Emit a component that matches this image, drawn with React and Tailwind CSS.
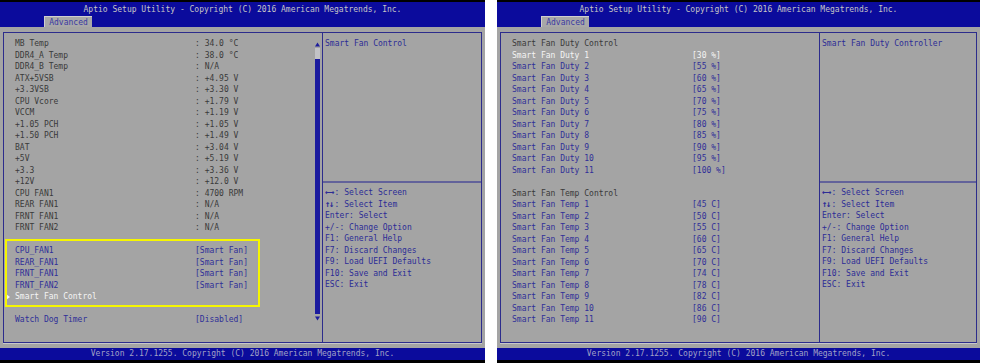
import React from 'react';

const ROW = 'h-[11.5px] leading-[11.5px] whitespace-pre';

const TONES = {
  info: 'text-[#3a3a3a]',
  item: 'text-[#2f2f98]',
  sel: 'text-[#f4f4f4]',
};

// first two help lines start with arrow pairs, drawn a touch larger
const keys = [
  ['←→', ': Select Screen'],
  ['↑↓', ': Select Item'],
  ['', 'Enter: Select'],
  ['', '+/-: Change Option'],
  ['', 'F1: General Help'],
  ['', 'F7: Discard Changes'],
  ['', 'F9: Load UEFI Defaults'],
  ['', 'F10: Save and Exit'],
  ['', 'ESC: Exit'],
];

const sensors = [
  ['MB Temp', ': 34.0 °C'],
  ['DDR4_A Temp', ': 38.0 °C'],
  ['DDR4_B Temp', ': N/A'],
  ['ATX+5VSB', ': +4.95 V'],
  ['+3.3VSB', ': +3.30 V'],
  ['CPU Vcore', ': +1.79 V'],
  ['VCCM', ': +1.19 V'],
  ['+1.05 PCH', ': +1.05 V'],
  ['+1.50 PCH', ': +1.49 V'],
  ['BAT', ': +3.04 V'],
  ['+5V', ': +5.19 V'],
  ['+3.3', ': +3.36 V'],
  ['+12V', ': +12.0 V'],
  ['CPU FAN1', ': 4700 RPM'],
  ['REAR FAN1', ': N/A'],
  ['FRNT FAN1', ': N/A'],
  ['FRNT FAN2', ': N/A'],
];

const fans = ['CPU_FAN1', 'REAR_FAN1', 'FRNT_FAN1', 'FRNT_FAN2'];
const duties = ['30', '55', '60', '65', '70', '75', '80', '85', '90', '95', '100'];
const temps = ['45', '50', '55', '60', '65', '70', '74', '78', '82', '86', '90'];

function Row({ label, value, tone = 'item' }) {
  return (
    <div className={`flex ${ROW} ${TONES[tone]}`}>
      <span className="w-[180px] shrink-0">{label}</span>
      <span>{value}</span>
    </div>
  );
}

function Blank() {
  return <div className="h-[11.5px]" />;
}

function ScrollBar() {
  return (
    <div className="w-[5px] mr-[2px] pt-[9px] pb-[21px] flex flex-col shrink-0">
      <svg width="5" height="5" viewBox="0 0 5 5" className="block">
        <path d="M2.5 0.5 L5 4.5 L0 4.5 Z" fill="#1c1c9c" />
      </svg>
      <div className="mt-px h-[11px] bg-[#c2c2c6]" />
      <div className="flex-1 bg-[#1a1a9e]" />
      <svg width="5" height="5" viewBox="0 0 5 5" className="block mt-[2px]">
        <path d="M0 0.5 L5 0.5 L2.5 4.5 Z" fill="#1c1c9c" />
      </svg>
    </div>
  );
}

function BiosScreen({ width, help, scroll, children }) {
  return (
    <div className={`${width} h-[363px] flex flex-col bg-[#a4a4a4] font-['DejaVu_Sans_Mono',monospace] text-[8px]`}>
      <div className="h-[2px] bg-black" />
      <div className="h-[25px] bg-[#0b0b9c] flex flex-col">
        <div className="pt-[2px] h-[14px] leading-[12px] text-center text-[#c6c6c6] whitespace-pre">
          Aptio Setup Utility - Copyright (C) 2016 American Megatrends, Inc.
        </div>
        <div className="ml-[44px] w-[48px] h-[11px] bg-[#a8a8a8] border-t border-l border-[#cfcfcf] text-[#3a3aa2] text-center leading-[11px]">
          Advanced
        </div>
      </div>

      <div className="flex-1 px-[3px] pt-[5px] pb-[5px]">
        <div className="h-full flex border border-[#2c2c8c] shadow-[0_1px_0_#c8c8c8]">
          <div className="w-[318px] shrink-0 flex">
            <div className="flex-1 pl-[11px] pt-[5px]">{children}</div>
            {scroll && <ScrollBar />}
          </div>
          <div className="w-px bg-[#2c2c8c]" />
          <div className="flex-1 flex flex-col text-[#2c2c96]">
            <div className="h-[148px] pl-[2px] pt-[5px]">
              <div className={ROW}>{help}</div>
            </div>
            <div className="h-[2px] bg-[#62629a]" />
            <div className="pl-[2px] pt-[4px]">
              {keys.map(([arrows, text]) => (
                <div key={text} className={`flex ${ROW}`}>
                  {arrows && (
                    <span className="inline-block w-[9.6px] overflow-hidden text-[9px] tracking-[-1.5px] font-bold">{arrows}</span>
                  )}
                  <span>{text}</span>
                </div>
              ))}
            </div>
          </div>
        </div>
      </div>

      <div className="h-[12px] bg-[#0b0b9c] text-center text-[#a2a2c6] leading-[12px] whitespace-pre">
        Version 2.17.1255. Copyright (C) 2016 American Megatrends, Inc.
      </div>
      <div className="h-[3px] bg-black" />
    </div>
  );
}

export default function App() {
  return (
    <div className="w-[982px] h-[363px] bg-white flex gap-[12px]">
      <BiosScreen width="w-[485px]" help="Smart Fan Control" scroll>
        {sensors.map(([l, v]) => (
          <Row key={l} label={l} value={v} tone="info" />
        ))}
        <Blank />
        <div className="relative">
          {fans.map((f) => (
            <Row key={f} label={f} value="[Smart Fan]" />
          ))}
          <div className={`relative ${ROW} ${TONES.sel}`}>
            <svg width="4" height="6" viewBox="0 0 4 6" className="absolute -left-[9px] top-[3px]">
              <path d="M0 0 L4 3 L0 6 Z" fill="#f4f4f4" />
            </svg>
            Smart Fan Control
          </div>
          {/* yellow highlight drawn over the fan rows */}
          <div className="absolute -top-[6px] -bottom-[4px] -left-[10px] w-[255px] border-2 border-[#f6f600] pointer-events-none" />
        </div>
        <Blank />
        <Row label="Watch Dog Timer" value="[Disabled]" />
      </BiosScreen>

      <BiosScreen width="w-[483px]" help="Smart Fan Duty Controller">
        <div className={`${ROW} ${TONES.info}`}>Smart Fan Duty Control</div>
        {duties.map((d, i) => (
          <Row key={d} label={`Smart Fan Duty ${i + 1}`} value={`[${d} %]`} tone={i === 0 ? 'sel' : 'item'} />
        ))}
        <Blank />
        <div className={`${ROW} ${TONES.info}`}>Smart Fan Temp Control</div>
        {temps.map((t, i) => (
          <Row key={t} label={`Smart Fan Temp ${i + 1}`} value={`[${t} C]`} />
        ))}
      </BiosScreen>
    </div>
  );
}
